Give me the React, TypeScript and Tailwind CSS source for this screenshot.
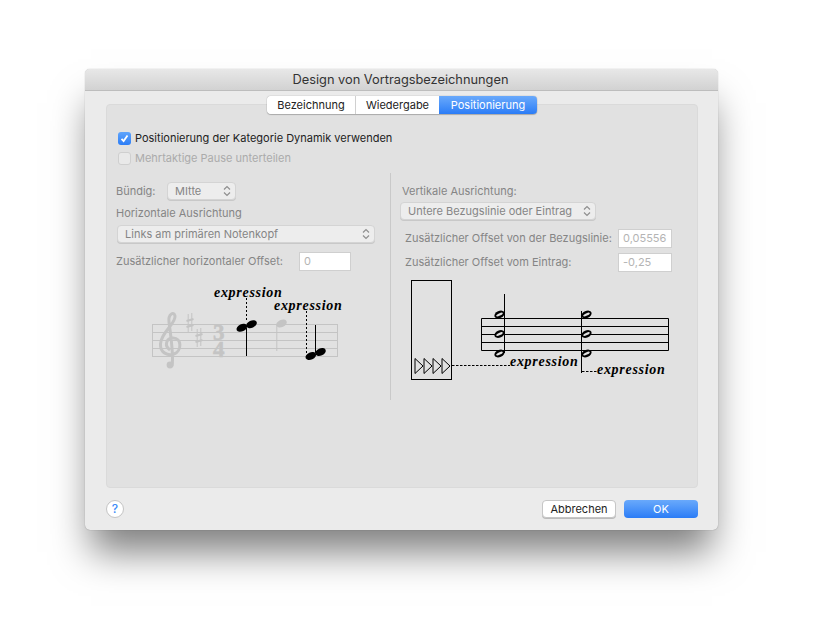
import React from "react";

const font = "font-['Inter','Liberation_Sans',sans-serif]";

const Updown: React.FC = () => (
  <svg width="8" height="12" viewBox="0 0 8 12" fill="none" stroke="#8f8f8f" strokeWidth="1.2">
    <path d="M1 4.5 L4 1.5 L7 4.5" />
    <path d="M1 7.5 L4 10.5 L7 7.5" />
  </svg>
);

const Select: React.FC<{ label: string; className: string }> = ({ label, className }) => (
  <div className={`flex h-[18px] items-center justify-between rounded-[4px] border border-[#d4d4d4] bg-[#ededed] pl-[7px] pr-[4px] text-[#858585] shadow-[0_1px_0_#c8c8c8] ${className}`}>
    <span>{label}</span>
    <Updown />
  </div>
);

const Field: React.FC<{ value: string; className?: string }> = ({ value, className }) => (
  <div className={`flex h-[19px] items-center border border-[#cfcfcf] bg-white pl-[4px] text-[#b4b4b4] ${className ?? ""}`}>{value}</div>
);

const Tab: React.FC<{ label: string; active?: boolean; className: string }> = ({ label, active, className }) => (
  <div className={`flex h-[18px] items-center justify-center ${active ? "bg-gradient-to-b from-[#69a9fb] to-[#2a7cf6] text-white" : "bg-white text-[#222]"} ${className}`}>{label}</div>
);

const Expr: React.FC<{ x: number; y: number }> = ({ x, y }) => (
  <text x={x} y={y} fontFamily="'Liberation Serif', serif" fontWeight="bold" fontStyle="italic" fontSize="14" letterSpacing="0.7" fill="#000">expression</text>
);

const Filled: React.FC<{ x: number; y: number; fill?: string }> = ({ x, y, fill = "#000" }) => (
  <ellipse cx={x} cy={y} rx="5.6" ry="3.6" transform={`rotate(-25 ${x} ${y})`} fill={fill} />
);

const Open: React.FC<{ x: number; y: number }> = ({ x, y }) => (
  <g transform={`rotate(-25 ${x} ${y})`}>
    <ellipse cx={x} cy={y} rx="5.4" ry="3.5" fill="#000" />
    <ellipse cx={x} cy={y} rx="3.6" ry="1.2" fill="#e1e1e1" />
  </g>
);

const Sharp: React.FC<{ x: number; y: number }> = ({ x, y }) => (
  <g stroke="#c4c4c4" fill="none" transform={`translate(${x} ${y})`}>
    <path d="M-1.8 -9 V9 M1.8 -10 V8" strokeWidth="1" />
    <path d="M-3.5 -2 L3.5 -4 M-3.5 4 L3.5 2" strokeWidth="2" />
  </g>
);

const LeftMusic: React.FC = () => (
  <svg width="190" height="90" viewBox="150 285 190 90" className="ml-[34px] mt-[14px] block overflow-visible">
    <g stroke="#c4c4c4" strokeWidth="1">
      {[324.5, 332.5, 340.5, 348.5, 356.5].map((y) => (
        <line key={y} x1="152" x2="338" y1={y} y2={y} />
      ))}
      <line x1="152.5" x2="152.5" y1="324.5" y2="356.5" />
      <line x1="337.5" x2="337.5" y1="324.5" y2="356.5" />
    </g>
    {/* treble clef */}
    <path
      d="M172 366 C174 356 170 330 169 322 C168 314 174 311 175 316 C176 324 161 332 160.5 344 C160 353 168 356 174 354 C182 351 182 338 173 338 C166 338 164 346 170 350"
      fill="none" stroke="#c4c4c4" strokeWidth="3"
    />
    <circle cx="170" cy="365" r="3.4" fill="#c4c4c4" />
    <Sharp x={190} y={323} />
    <Sharp x={199} y={338} />
    <text x="213" y="340" fontFamily="'Liberation Serif', serif" fontWeight="bold" fontSize="23" stroke="#c4c4c4" strokeWidth="0.5" fill="#c4c4c4">3</text>
    <text x="213" y="357" fontFamily="'Liberation Serif', serif" fontWeight="bold" fontSize="23" stroke="#c4c4c4" strokeWidth="0.5" fill="#c4c4c4">4</text>
    <Filled x={281.5} y={323.5} fill="#c4c4c4" />
    <line x1="276.8" x2="276.8" y1="325" y2="351" stroke="#c4c4c4" />
    <line x1="246.5" x2="246.5" y1="298" y2="322" stroke="#000" strokeDasharray="2 2" />
    <Filled x={241.8} y={327.8} />
    <Filled x={251.5} y={324.2} />
    <line x1="246.5" x2="246.5" y1="328" y2="356" stroke="#000" />
    <line x1="306.5" x2="306.5" y1="311" y2="353" stroke="#000" strokeDasharray="2 2" />
    <Filled x={310.8} y={356} />
    <Filled x={320.5} y={352} />
    <line x1="315.5" x2="315.5" y1="325" y2="353" stroke="#000" />
    <Expr x={214} y={297} />
    <Expr x={274} y={310} />
  </svg>
);

const RightMusic: React.FC = () => (
  <svg width="270" height="105" viewBox="405 278 270 105" className="mt-[6px] ml-[5px] block overflow-visible">
    <rect x="411.5" y="280.5" width="40" height="99" fill="none" stroke="#000" />
    {[415, 424, 433, 442].map((x) => (
      <path key={x} d={`M${x} 358.5 L${x + 8} 366 L${x} 373.5 Z`} fill="none" stroke="#000" />
    ))}
    <line x1="452" x2="510" y1="365.5" y2="365.5" stroke="#000" strokeDasharray="2.5 1.5" />
    <g stroke="#000">
      {[318.5, 326.5, 334.5, 342.5, 350.5].map((y) => (
        <line key={y} x1="481.5" x2="668.5" y1={y} y2={y} />
      ))}
      <line x1="481.5" x2="481.5" y1="318.5" y2="350.5" />
      <line x1="668.5" x2="668.5" y1="318.5" y2="350.5" />
    </g>
    {[314.5, 334, 353.5].map((y) => <Open key={y} x={499.5} y={y} />)}
    {[314.5, 334, 353.5].map((y) => <Open key={y} x={586.5} y={y} />)}
    <line x1="504.5" x2="504.5" y1="294" y2="353" stroke="#000" />
    <line x1="581.5" x2="581.5" y1="311" y2="373" stroke="#000" />
    <line x1="582" x2="597" y1="371.5" y2="371.5" stroke="#000" strokeDasharray="2.5 1.5" />
    <Expr x={510} y={366} />
    <Expr x={597} y={374} />
  </svg>
);

export default function App() {
  return (
    <div className={`h-[637px] w-[836px] overflow-hidden bg-white pl-[85px] pt-[69px] text-[11px] ${font}`}>
      <div className="flex h-[461px] w-[633px] flex-col rounded-[5px] bg-[#ebebeb] shadow-[0_0_1px_rgba(0,0,0,0.4),0_28px_36px_-6px_rgba(0,0,0,0.5)]">
        <div className="flex h-[22px] items-center justify-center rounded-t-[5px] border-b border-[#bdbdbd] bg-gradient-to-b from-[#e8e8e8] to-[#d2d2d2] pr-[2px] text-[12.8px] text-[#333]">
          Design von Vortragsbezeichnungen
        </div>
        <div className="flex flex-1 flex-col pl-[21px] pr-[20px]">
          <div className="relative z-10 mt-[5px] flex justify-center">
            <div className="flex rounded-[4px] shadow-[0_0_1px_rgba(0,0,0,0.5),0_1px_1px_rgba(0,0,0,0.2)]">
              <Tab label="Bezeichnung" className="w-[89px] rounded-l-[4px] border-r border-[#d0d0d0]" />
              <Tab label="Wiedergabe" className="w-[83px]" />
              <Tab label="Positionierung" active className="w-[98px] rounded-r-[4px]" />
            </div>
          </div>
          <div className="-mt-[10px] h-[384px] rounded-[4px] border border-[#dadada] bg-[#e1e1e1] pl-[11px]">
            <div className="mt-[23px] flex h-[20px] items-center gap-[4px] text-[#222]">
              <div className="flex h-[13px] w-[13px] items-center justify-center rounded-[3px] bg-gradient-to-b from-[#5fa4fb] to-[#2b7df6]">
                <svg width="9" height="9" viewBox="0 0 9 9" fill="none" stroke="#fff" strokeWidth="1.8"><path d="M1.5 4.8 L3.6 7 L7.5 1.5" /></svg>
              </div>
              Positionierung der Kategorie Dynamik verwenden
            </div>
            <div className="flex h-[20px] items-center gap-[4px] text-[#ababab]">
              <div className="h-[13px] w-[13px] rounded-[3px] border border-[#cfcfcf] bg-[#e9e9e9]" />
              Mehrtaktige Pause unterteilen
            </div>
            <div className="mt-[5px] flex text-[#858585]">
              <div className="-ml-[2px] w-[274px]">
                <div className="mt-[9px] flex h-[18px] items-center">
                  <span className="w-[51px]">Bündig:</span>
                  <Select label="MItte" className="w-[69px]" />
                </div>
                <div className="mt-[4px] flex h-[18px] items-center">Horizontale Ausrichtung</div>
                <Select label="Links am primären Notenkopf" className="ml-[1px] mt-[3px] w-[258px]" />
                <div className="mt-[9px] flex items-center">
                  <span className="w-[183px]">Zusätzlicher horizontaler Offset:</span>
                  <Field value="0" className="w-[52px]" />
                </div>
                <LeftMusic />
              </div>
              <div className="h-[227px] border-l border-[#c9c9c9] pl-[9px]">
                <div className="mt-[9px] flex h-[18px] items-center pl-[2px]">Vertikale Ausrichtung:</div>
                <Select label="Untere Bezugslinie oder Eintrag" className="mt-[2px] w-[196px]" />
                <div className="ml-[5px] mt-[9px] flex items-center">
                  <span className="w-[213px]">Zusätzlicher Offset von der Bezugslinie:</span>
                  <Field value="0,05556" className="w-[54px]" />
                </div>
                <div className="ml-[5px] mt-[5px] flex items-center">
                  <span className="w-[213px]">Zusätzlicher Offset vom Eintrag:</span>
                  <Field value="-0,25" className="w-[54px]" />
                </div>
                <RightMusic />
              </div>
            </div>
          </div>
          <div className="mt-[12px] flex items-center justify-between">
            <div className="flex h-[18px] w-[18px] items-center justify-center rounded-full border border-[#c4c4c4] bg-white text-[12px] font-medium text-[#3d8cf8]">?</div>
            <div className="flex gap-[8px]">
              <div className="flex h-[18px] w-[74px] items-center justify-center rounded-[4px] border border-[#c6c6c6] bg-white text-[#222] shadow-[0_1px_0_#bbb]">Abbrechen</div>
              <div className="flex h-[18px] w-[74px] items-center justify-center rounded-[4px] bg-gradient-to-b from-[#69a9fb] to-[#2a7cf6] text-white">OK</div>
            </div>
          </div>
        </div>
      </div>
    </div>
  );
}
